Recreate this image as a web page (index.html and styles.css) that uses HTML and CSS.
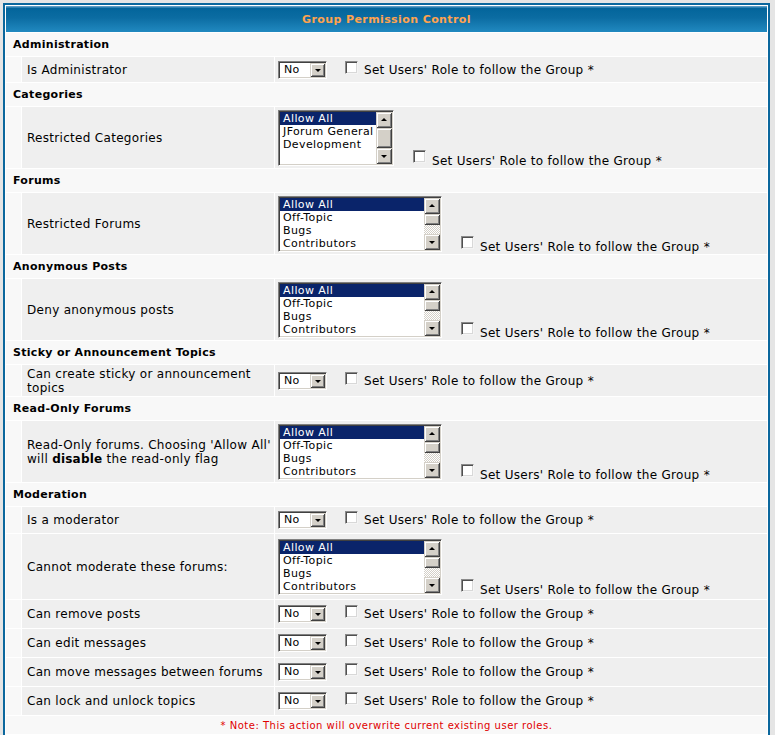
FILE: index.html
```html
<!DOCTYPE html>
<html>
<head>
<meta charset="utf-8">
<title>Group Permission Control</title>
<link rel="stylesheet" href="styles.css">
</head>
<body>
<table class="forumline">
  <tr><th colspan="3" class="title">Group Permission Control</th></tr>

  <tr class="sec"><td colspan="3">Administration</td></tr>
  <tr class="item r-admin">
    <td class="ind"></td>
    <td class="lbl">Is Administrator</td>
    <td class="cell"><div class="ctl"><span class="sel"><span class="sel-val">No</span><span class="btn"><span class="arr-dn"></span></span></span><span class="chk"></span><span class="chk-txt">Set Users' Role to follow the Group *</span></div></td>
  </tr>

  <tr class="sec"><td colspan="3">Categories</td></tr>
  <tr class="item r-list">
    <td class="ind"></td>
    <td class="lbl">Restricted Categories</td>
    <td class="cell"><div class="ctl ctl-list">
      <div class="lb lb-narrow">
        <ul class="lb-opts"><li class="on">Allow All</li><li>JForum General</li><li>Development</li></ul>
        <div class="sb"><span class="btn sq"><span class="arr-up"></span></span><span class="btn thumb thumb-full"></span><span class="btn sq"><span class="arr-dn"></span></span></div>
      </div>
      <span class="chk"></span><span class="chk-txt">Set Users' Role to follow the Group *</span>
    </div></td>
  </tr>

  <tr class="sec"><td colspan="3">Forums</td></tr>
  <tr class="item r-list">
    <td class="ind"></td>
    <td class="lbl">Restricted Forums</td>
    <td class="cell"><div class="ctl ctl-list">
      <div class="lb">
        <ul class="lb-opts"><li class="on">Allow All</li><li>Off-Topic</li><li>Bugs</li><li>Contributors</li></ul>
        <div class="sb"><span class="btn sq"><span class="arr-up"></span></span><span class="btn thumb"></span><span class="track"></span><span class="btn sq"><span class="arr-dn"></span></span></div>
      </div>
      <span class="chk"></span><span class="chk-txt">Set Users' Role to follow the Group *</span>
    </div></td>
  </tr>

  <tr class="sec"><td colspan="3">Anonymous Posts</td></tr>
  <tr class="item r-list">
    <td class="ind"></td>
    <td class="lbl">Deny anonymous posts</td>
    <td class="cell"><div class="ctl ctl-list">
      <div class="lb">
        <ul class="lb-opts"><li class="on">Allow All</li><li>Off-Topic</li><li>Bugs</li><li>Contributors</li></ul>
        <div class="sb"><span class="btn sq"><span class="arr-up"></span></span><span class="btn thumb"></span><span class="track"></span><span class="btn sq"><span class="arr-dn"></span></span></div>
      </div>
      <span class="chk"></span><span class="chk-txt">Set Users' Role to follow the Group *</span>
    </div></td>
  </tr>

  <tr class="sec"><td colspan="3">Sticky or Announcement Topics</td></tr>
  <tr class="item r-two">
    <td class="ind"></td>
    <td class="lbl">Can create sticky or announcement topics</td>
    <td class="cell"><div class="ctl"><span class="sel"><span class="sel-val">No</span><span class="btn"><span class="arr-dn"></span></span></span><span class="chk"></span><span class="chk-txt">Set Users' Role to follow the Group *</span></div></td>
  </tr>

  <tr class="sec"><td colspan="3">Read-Only Forums</td></tr>
  <tr class="item r-list">
    <td class="ind"></td>
    <td class="lbl"><span class="ln">Read-Only forums. Choosing 'Allow All'</span> <span>will</span> <b>disable</b> <span>the read-only flag</span></td>
    <td class="cell"><div class="ctl ctl-list">
      <div class="lb">
        <ul class="lb-opts"><li class="on">Allow All</li><li>Off-Topic</li><li>Bugs</li><li>Contributors</li></ul>
        <div class="sb"><span class="btn sq"><span class="arr-up"></span></span><span class="btn thumb"></span><span class="track"></span><span class="btn sq"><span class="arr-dn"></span></span></div>
      </div>
      <span class="chk"></span><span class="chk-txt">Set Users' Role to follow the Group *</span>
    </div></td>
  </tr>

  <tr class="sec"><td colspan="3">Moderation</td></tr>
  <tr class="item r-mod">
    <td class="ind"></td>
    <td class="lbl">Is a moderator</td>
    <td class="cell"><div class="ctl"><span class="sel"><span class="sel-val">No</span><span class="btn"><span class="arr-dn"></span></span></span><span class="chk"></span><span class="chk-txt">Set Users' Role to follow the Group *</span></div></td>
  </tr>
  <tr class="item r-list r-list-tall">
    <td class="ind"></td>
    <td class="lbl">Cannot moderate these forums:</td>
    <td class="cell"><div class="ctl ctl-list">
      <div class="lb">
        <ul class="lb-opts"><li class="on">Allow All</li><li>Off-Topic</li><li>Bugs</li><li>Contributors</li></ul>
        <div class="sb"><span class="btn sq"><span class="arr-up"></span></span><span class="btn thumb"></span><span class="track"></span><span class="btn sq"><span class="arr-dn"></span></span></div>
      </div>
      <span class="chk"></span><span class="chk-txt">Set Users' Role to follow the Group *</span>
    </div></td>
  </tr>
  <tr class="item r-sel">
    <td class="ind"></td>
    <td class="lbl">Can remove posts</td>
    <td class="cell"><div class="ctl"><span class="sel"><span class="sel-val">No</span><span class="btn"><span class="arr-dn"></span></span></span><span class="chk"></span><span class="chk-txt">Set Users' Role to follow the Group *</span></div></td>
  </tr>
  <tr class="item r-sel">
    <td class="ind"></td>
    <td class="lbl">Can edit messages</td>
    <td class="cell"><div class="ctl"><span class="sel"><span class="sel-val">No</span><span class="btn"><span class="arr-dn"></span></span></span><span class="chk"></span><span class="chk-txt">Set Users' Role to follow the Group *</span></div></td>
  </tr>
  <tr class="item r-sel">
    <td class="ind"></td>
    <td class="lbl">Can move messages between forums</td>
    <td class="cell"><div class="ctl"><span class="sel"><span class="sel-val">No</span><span class="btn"><span class="arr-dn"></span></span></span><span class="chk"></span><span class="chk-txt">Set Users' Role to follow the Group *</span></div></td>
  </tr>
  <tr class="item r-sel">
    <td class="ind"></td>
    <td class="lbl">Can lock and unlock topics</td>
    <td class="cell"><div class="ctl"><span class="sel"><span class="sel-val">No</span><span class="btn"><span class="arr-dn"></span></span></span><span class="chk"></span><span class="chk-txt">Set Users' Role to follow the Group *</span></div></td>
  </tr>

  <tr class="note"><td colspan="3">* Note: This action will overwrite current existing user roles.</td></tr>
</table>
</body>
</html>
```

FILE: styles.css
```css
body {
  margin: 3px 5px 0 3px;
  background: #e5e5e5;
  font-family: "DejaVu Sans", Verdana, sans-serif;
  font-size: 12px;
  letter-spacing: 0.3px;
  color: #000;
}

.forumline {
  width: 100%;
  border: 2px solid #0b679d;
  background: #fff;
  border-spacing: 1px;
}

.forumline td,
.forumline th {
  padding: 0;
}

.title {
  height: 26px;
  color: #ffa34f;
  font-weight: bold;
  font-size: 11px;
  letter-spacing: 0.4px;
  text-align: center;
  background: linear-gradient(#5a9cc6 0, #5a9cc6 1px, #03659b 2px, #0b6ca2 45%, #2189c0 100%);
}

.sec td {
  height: 23px;
  padding: 0 6px 0 7px;
  font-size: 11px;
  letter-spacing: 0.3px;
  font-weight: bold;
  background: #f8f8f8;
}

.item td {
  background: #efefef;
}

.item td.ind {
  width: 15px;
  background: #f8f8f8;
}

.lbl {
  width: 247px;
  padding: 0 0 0 5px !important;
  line-height: 14px;
}

.lbl .ln {
  white-space: nowrap;
}

.lbl b {
  letter-spacing: 0.2px;
}

.cell {
  padding: 0 3px !important;
}

.r-admin td { height: 25px; }
.r-mod td { height: 26px; }
.r-sel td { height: 28px; }
.r-two td { height: 31px; }
.r-list td { height: 61px; }
.r-list-tall td { height: 65px; }

.note td {
  height: 18px;
  text-align: center;
  color: #e00000;
  font-size: 10px;
  letter-spacing: 0.5px;
  background: #f8f8f8;
}

/* control row */
.ctl {
  display: flex;
  align-items: flex-start;
}

.ctl-list {
  align-items: flex-end;
}

.chk-txt {
  line-height: 18px;
  white-space: nowrap;
}

.ctl-list .chk-txt {
  line-height: 14px;
  margin-bottom: -2px;
}

/* checkbox */
.chk {
  flex: none;
  width: 13px;
  height: 13px;
  box-sizing: border-box;
  margin: 0 6px 0 18px;
  background: #fff;
  border: 1px solid;
  border-color: #8a8a8a #f4f4f4 #f4f4f4 #8a8a8a;
  box-shadow: inset 1px 1px #505050, inset -1px -1px #d8d8d8;
}

.ctl-list .chk {
  margin: 0 6px 3px 19px;
}

/* dropdown */
.sel {
  flex: none;
  display: flex;
  align-items: center;
  width: 49px;
  height: 18px;
  box-sizing: border-box;
  padding: 1px;
  background: #fff;
  border: 1px solid;
  border-color: #808080 #fff #fff #808080;
  box-shadow: inset 1px 1px #404040, inset -1px -1px #d4d0c8;
}

.sel-val {
  flex: 1;
  padding-left: 4px;
  font-size: 11px;
  letter-spacing: 0.2px;
  line-height: 14px;
}

.sel .btn {
  width: 15px;
  height: 14px;
}

/* 3D button */
.btn {
  display: flex;
  align-items: center;
  justify-content: center;
  box-sizing: border-box;
  background: #d4d0c8;
  box-shadow: inset 1px 1px #d4d0c8, inset -1px -1px #404040, inset 2px 2px #fff, inset -2px -2px #808080;
}

.arr-dn,
.arr-up {
  width: 0;
  height: 0;
  border-left: 3px solid transparent;
  border-right: 3px solid transparent;
}

.arr-dn {
  border-top: 3px solid #000;
  margin-top: 1px;
}

.arr-up {
  border-bottom: 3px solid #000;
}

/* listbox */
.lb {
  flex: none;
  display: flex;
  width: 164px;
  height: 56px;
  box-sizing: border-box;
  padding: 1px;
  background: #fff;
  border: 1px solid;
  border-color: #808080 #fff #fff #808080;
  box-shadow: inset 1px 1px #404040, inset -1px -1px #d4d0c8;
}

.lb-narrow {
  width: 116px;
}

.lb-opts {
  flex: 1;
  margin: 0;
  padding: 0;
  list-style: none;
  font-size: 11px;
  letter-spacing: 0.4px;
}

.lb-opts li {
  height: 13px;
  line-height: 13px;
  padding-left: 3px;
  white-space: nowrap;
}

.lb-opts li.on {
  background: #0a246a;
  color: #fff;
}

.sb {
  width: 16px;
  display: flex;
  flex-direction: column;
}

.sb .sq {
  height: 16px;
  flex: none;
}

.thumb {
  height: 11px;
  flex: none;
}

.thumb-full {
  flex: 1;
}

.track {
  flex: 1;
  background-color: #fff;
  background-image: repeating-conic-gradient(#d4d0c8 0 25%, #fff 0 50%);
  background-size: 2px 2px;
}
```
